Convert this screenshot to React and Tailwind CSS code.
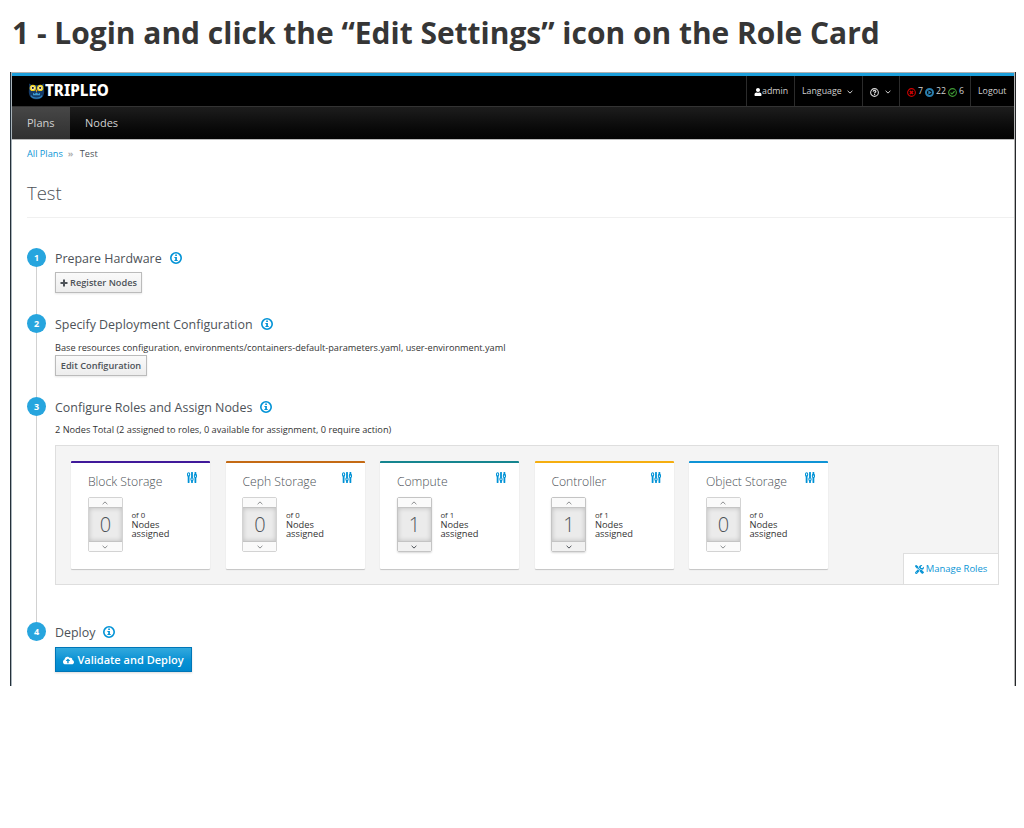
import React from "react";
import { FaUser, FaCloudUploadAlt } from "react-icons/fa";
import { FaScrewdriverWrench } from "react-icons/fa6";

function Info() {
  return (
    <svg className="h-[12px] w-[12px]" viewBox="0 0 12 12">
      <circle cx="6" cy="6" r="5.200" fill="none" stroke="#0092d6" strokeWidth="1.600" />
      <path d="M4.400 4.900h2.500v3.100h.8v1.100H4.400V8h.8V6h-.8zM5.200 2.500h1.700v1.600H5.200z" fill="#0092d6" />
    </svg>
  );
}

function Plus() {
  return (
    <svg className="h-[8px] w-[8px]" viewBox="0 0 8 8" stroke="#4d5258" strokeWidth="2">
      <path d="M4 .5v7M.5 4h7" />
    </svg>
  );
}

function Chevron({ up, className }) {
  return (
    <svg className={className} viewBox="0 0 6 4" fill="none" stroke="currentColor" strokeWidth="1">
      <path d={up ? "M.6 3.200 3 .9l2.400 2.300" : "M.6.8 3 3.100 5.400.8"} />
    </svg>
  );
}

function Sliders() {
  return (
    <svg className="h-[11px] w-[10px]" viewBox="0 0 10 11" fill="none" stroke="#0092d6">
      <path d="M1.600 4.400v5.900M5 .7v4.600M5 9v1.300M8.400.7v2M8.400 6v4.300" strokeWidth="1.800" strokeLinecap="round" />
      <ellipse cx="1.600" cy="2.500" rx="1.100" ry="1.700" strokeWidth="1.100" />
      <ellipse cx="5" cy="7.300" rx="1.100" ry="1.600" strokeWidth="1.100" />
      <ellipse cx="8.400" cy="4" rx="1.100" ry="1.600" strokeWidth="1.100" />
    </svg>
  );
}

function Owl() {
  return (
    <svg className="h-[17px] w-[17px]" viewBox="0 0 17 17">
      <path d="M1 .5 4 2h9L16 .5l-.3 4c1 4.500.6 8.200-2.200 10.300-2.800 2-7.200 2-10 0C.7 12.700.3 9 1.300 4.500z" fill="#143a68" />
      <path d="M3 12.500c1.200 3.400 9.800 3.400 11 0" fill="none" stroke="#2f7fb8" strokeWidth="1.200" />
      <path d="M5 12.300V9.800l1.700 1.200 1.800-1.500 1.800 1.500L12 9.800v2.500z" fill="#3f9bd0" />
      <circle cx="4.800" cy="4.900" r="2.500" fill="#fffbe0" stroke="#f3d21b" strokeWidth="1.300" />
      <circle cx="12.200" cy="4.900" r="2.500" fill="#fffbe0" stroke="#f3d21b" strokeWidth="1.300" />
      <circle cx="4.800" cy="4.900" r="1.100" fill="#222" />
      <circle cx="12.200" cy="4.900" r="1.100" fill="#222" />
      <path d="M7.500 6.800h2L8.500 9.600z" fill="#f0a51e" />
    </svg>
  );
}

function Status({ kind }) {
  const color = kind === "error" ? "#d00000" : kind === "run" ? "#2b7fae" : "#3f9c35";
  return (
    <svg className="h-[9px] w-[9px] flex-none" viewBox="0 0 10 10" fill="none" stroke={color}>
      <circle cx="5" cy="5" r={kind === "run" ? 3.900 : 4.300} strokeWidth={kind === "run" ? 2.200 : 1.2} />
      {kind === "error" && <path d="M3.300 3.300l3.400 3.400M6.700 3.300 3.300 6.700" strokeWidth="1.800" />}
      {kind === "run" && <path d="M3.600 2.600 7.400 5 3.600 7.400z" fill={color} stroke="none" />}
      {kind === "ok" && <path d="M2.800 5.200 4.400 6.700 7.300 3.600" strokeWidth="1.300" />}
    </svg>
  );
}

function Help() {
  return (
    <svg className="h-[9px] w-[9px]" viewBox="0 0 10 10" fill="none" stroke="#d8d8d8">
      <circle cx="5" cy="5" r="4.300" strokeWidth="1.200" />
      <path d="M3.500 4c.1-1 .7-1.400 1.500-1.400s1.500.5 1.500 1.200C6.500 4.700 5.100 4.700 5.100 6M5.100 6.700v1.100" strokeWidth="1.300" />
    </svg>
  );
}

function Step({ n, title, height, last, children }) {
  return (
    <div className={`flex ${height}`}>
      <div className="flex w-[19px] flex-none flex-col items-center">
        <div className="flex h-[19px] w-[19px] flex-none items-center justify-center rounded-full bg-[#27a5de] text-[9px] font-bold leading-none text-white">
          {n}
        </div>
        {!last && <div className="w-px flex-1 bg-[#d1d1d1]" />}
      </div>
      <div className="ml-[9px] flex-1">
        <div className="flex h-[20px] items-center gap-[8px]">
          <span className={`whitespace-nowrap text-[12.430px] leading-[18px] text-[#4d5258] ${last ? "pt-[2px]" : "pt-px"}`}>{title}</span>
          <Info />
        </div>
        {children}
      </div>
    </div>
  );
}

function Button({ children, className }) {
  return (
    <button
      className={`flex h-[21px] items-center justify-center whitespace-nowrap border border-[#bbb] bg-linear-to-b from-[#fafafa] to-[#ededed] text-[9.200px] font-semibold text-[#4d5258] shadow-[0_1px_2px_rgba(3,3,3,0.1)] ${className}`}
    >
      {children}
    </button>
  );
}

const roles = [
  { name: "Block Storage", count: 0, bar: "border-[#40199a]" },
  { name: "Ceph Storage", count: 0, bar: "border-[#c46a14]" },
  { name: "Compute", count: 1, bar: "border-[#15858f]" },
  { name: "Controller", count: 1, bar: "border-[#f5ae10]" },
  { name: "Object Storage", count: 0, bar: "border-[#0f93d5]" },
];

function RoleCard({ role }) {
  const down = role.count > 0;
  return (
    <div className={`h-[108px] w-[139px] rounded-[1px] border-t-2 bg-white pl-[16.500px] pr-[13px] shadow-[0_1px_1px_rgba(3,3,3,0.2)] ${role.bar}`}>
      <div className="flex h-[34px] items-start justify-between">
        <span className="mt-[10px] whitespace-nowrap text-[12.200px] font-light leading-[18px] text-[#4d5258]">{role.name}</span>
        <span className="mt-[9px]"><Sliders /></span>
      </div>
      <div className="flex">
        <div className={`h-[55px] w-[35px] rounded-[2px] border ${down ? "border-[#c4c4c4] shadow-[0_1px_2px_rgba(3,3,3,0.15)]" : "border-[#d3d3d3]"}`}>
          <div className="flex h-[9px] items-center justify-center bg-[#fafafa] text-[#8b8d8f]"><Chevron up className="h-[4px] w-[6px]" /></div>
          <div className="flex h-[35px] items-center justify-center border-y border-[#c4c4c4] bg-[#ebebeb] text-[20px] font-light text-[#4d5258] shadow-[inset_0_0_5px_rgba(3,3,3,0.2)]">
            {role.count}
          </div>
          <div className={`flex h-[9px] items-center justify-center ${down ? "bg-[#f1f1f1] text-[#4d5258]" : "bg-[#fafafa] text-[#8b8d8f]"}`}><Chevron className="h-[4px] w-[6px]" /></div>
        </div>
        <div className="ml-[8.500px] mt-[14px] text-[9.300px] leading-[9px] text-[#333]">
          <div className="text-[7.800px]">of {role.count}</div>
          <div>Nodes</div>
          <div>assigned</div>
        </div>
      </div>
    </div>
  );
}

export default function App() {
  return (
    <div className="h-[828px] w-[1024px] overflow-hidden bg-white font-['Open_Sans',sans-serif]">
      <h1 className="h-[72px] whitespace-nowrap pl-[12px] pt-[12px] text-[29.960px] font-bold leading-[41px] text-[#363636]">
        1 - Login and click the “Edit Settings” icon on the Role Card
      </h1>
      <div className="ml-[10px] flex h-[614px] w-[1006px] flex-col border-l border-r border-l-[#24303a] border-r-[#24272a]">
        <div className="flex flex-1 flex-col border-l border-r border-l-[#a9b4bb] border-r-[#b5b5b5]">
          <div className="h-[4px] border-t border-[#b0b0b0] bg-[#1c9fdb]" />
          <header className="flex h-[30px] justify-between bg-black text-[8.800px] text-[#d1d1d1]">
            <div className="flex items-center pl-[16px]">
              <Owl />
              <span className="font-['Noto_Sans','Open_Sans',sans-serif] text-[15.200px] font-extrabold leading-none text-white">TRIPLEO</span>
            </div>
            <div className="flex [&>div]:flex [&>div]:items-center [&>div]:border-l [&>div]:border-[#2b2b2b] [&>div]:pt-[2px]">
              <div className="w-[48px] pl-[7px]"><FaUser className="h-[8px] w-[8px] text-white" />admin</div>
              <div className="w-[68px] gap-[5px] pl-[7px]">Language<Chevron className="h-[4px] w-[6px]" /></div>
              <div className="w-[37px] gap-[6px] pl-[7px]"><Help /><Chevron className="h-[4px] w-[6px]" /></div>
              <div className="w-[71px] gap-[2px] pl-[7px]">
                <Status kind="error" />7<Status kind="run" />22<Status kind="ok" />6
              </div>
              <div className="w-[44px] pl-[7px]">Logout</div>
            </div>
          </header>
          <nav className="flex h-[33px] border-t border-[#333] bg-linear-to-b from-[#1d1d1d] to-[#030303] text-[11px] text-[#d1d1d1]">
            <div className="flex w-[58px] items-center bg-linear-to-b from-[#474747] to-[#303030] pl-[15px]">Plans</div>
            <div className="flex items-center pl-[15px]">Nodes</div>
          </nav>
          <main className="flex-1 border-t border-[#bbb] pl-[15px]">
            <div className="flex h-[28px] items-center text-[9.200px] text-[#4d5258]">
              <span className="text-[#0c96d6]">All Plans</span>
              <span className="ml-[5px] w-[12px] font-bold text-[#b0b0b0]">»</span>
              <span>Test</span>
            </div>
            <h2 className="h-[50px] border-b border-[#f0f0f0] pt-[12px] text-[18.500px] font-light leading-[26px] text-[#4d5258]">Test</h2>
            <div className="pt-[30px]">
              <Step n={1} title="Prepare Hardware" height="h-[66px]">
                <Button className="mt-[4px] w-[87px] gap-[2px]"><Plus />Register Nodes</Button>
              </Step>
              <Step n={2} title="Specify Deployment Configuration" height="h-[83px]">
                <div className="mt-[7px] h-[14px] whitespace-nowrap text-[9.190px] leading-[13px] text-[#333]">
                  Base resources configuration, environments/containers-default-parameters.yaml, user-environment.yaml
                </div>
                <Button className="w-[92px]">Edit Configuration</Button>
              </Step>
              <Step n={3} title="Configure Roles and Assign Nodes" height="h-[225px]">
                <div className="mt-[6px] h-[13px] whitespace-nowrap text-[9.210px] leading-[13px] text-[#333]">
                  2 Nodes Total (2 assigned to roles, 0 available for assignment, 0 require action)
                </div>
                <div className="mt-[9px] flex h-[140px] w-[944px] justify-between border border-[#dedede] bg-[#f4f4f4]">
                  <div className="flex gap-[15.500px] pl-[15.400px] pt-[15px]">
                    {roles.map((r) => <RoleCard key={r.name} role={r} />)}
                  </div>
                  <div className="flex h-[31px] w-[95px] items-center justify-center gap-[2px] self-end whitespace-nowrap border-l border-t border-[#dedede] bg-white text-[9.500px] text-[#0c96d6]">
                    <FaScrewdriverWrench className="h-[9px] w-[9px]" />Manage Roles
                  </div>
                </div>
              </Step>
              <Step n={4} title="Deploy" height="h-[55px]" last>
                <button className="mt-[5px] flex h-[25px] w-[137px] items-center justify-center gap-[3px] whitespace-nowrap border border-[#0076b7] bg-linear-to-b from-[#30a9de] via-[#0a93d4] to-[#0088ce] pt-px text-[11px] font-semibold text-white shadow-[0_1px_2px_rgba(3,3,3,0.15)]">
                  <FaCloudUploadAlt className="h-[11px] w-[11px]" />Validate and Deploy
                </button>
              </Step>
            </div>
          </main>
        </div>
      </div>
    </div>
  );
}
